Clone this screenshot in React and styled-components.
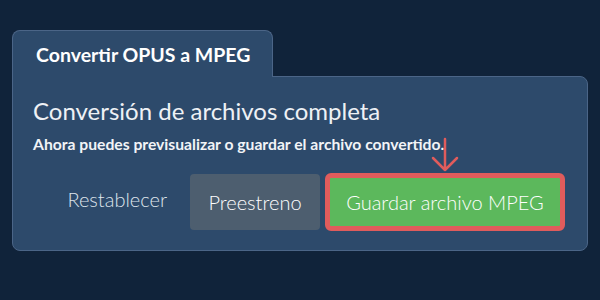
import styled, { createGlobalStyle } from 'styled-components';

const GlobalStyle = createGlobalStyle`
  html, body {
    margin: 0;
    padding: 0;
    background: #10233a;
    font-family: Lato, "Noto Sans", sans-serif;
  }
`;

const Page = styled.div`
  width: 600px;
  height: 300px;
  box-sizing: border-box;
  padding: 30px 12px 0 12px;
`;

const Tab = styled.div`
  display: inline-block;
  box-sizing: border-box;
  width: 261px;
  height: 47px;
  padding: 12px 0 0 23px;
  background: #2d4a6b;
  border: 1px solid #4b6587;
  border-bottom: none;
  border-radius: 8px 8px 0 0;
  color: #ffffff;
  font-weight: 700;
  font-size: 19.5px;
  position: relative;
  z-index: 1;
  margin-bottom: -1px;
`;

const Panel = styled.div`
  box-sizing: border-box;
  height: 175px;
  background: #2d4a6b;
  border: 1px solid #4b6587;
  border-radius: 0 8px 8px 8px;
  padding: 18px 22px 0 20px;
`;

const Heading = styled.h2`
  margin: 0;
  font-size: 24px;
  font-weight: 400;
  color: #eef1f5;
  line-height: 32px;
`;

const Sub = styled.p`
  margin: 7px 0 0 0;
  font-size: 15.7px;
  font-weight: 700;
  color: #f2f4f7;
  line-height: 20px;
`;

const Actions = styled.div`
  display: flex;
  justify-content: flex-end;
  align-items: center;
  gap: 5px;
  margin-top: 19px;
`;

const Button = styled.button`
  position: relative;
  box-sizing: border-box;
  height: ${p => (p.$kind === 'primary' ? 58 : 56)}px;
  font-family: inherit;
  font-size: 20px;
  font-weight: 300;
  white-space: nowrap;
  border-radius: ${p => (p.$kind === 'primary' ? 6 : 4)}px;
  cursor: pointer;
  color: ${p => (p.$kind === 'ghost' ? '#dfe5ec' : '#ffffff')};
  background: ${p =>
    p.$kind === 'primary' ? '#5cb85c' : p.$kind === 'muted' ? '#4d5e6f' : 'transparent'};
  border: ${p => (p.$kind === 'primary' ? '5px solid #e05c5c' : 'none')};
  padding: ${p => (p.$kind === 'ghost' ? '0 18px 6px 0' : '0')};
  width: ${p => (p.$w ? `${p.$w}px` : 'auto')};
`;

const Arrow = styled.svg`
  position: absolute;
  left: 50%;
  top: -40px;
  transform: translateX(-50%);
  overflow: visible;
`;

export default function App() {
  return (
    <>
      <GlobalStyle />
      <Page>
        <Tab>Convertir OPUS a MPEG</Tab>
        <Panel>
          <Heading>Conversión de archivos completa</Heading>
          <Sub>Ahora puedes previsualizar o guardar el archivo convertido.</Sub>
          <Actions>
            <Button $kind="ghost">Restablecer</Button>
            <Button $kind="muted" $w={130}>Preestreno</Button>
            <Button $kind="primary" $w={240}>
              Guardar archivo MPEG
              <Arrow width="28" height="34" viewBox="0 0 28 34">
                <path
                  d="M14 1 L14 32 M2 20 L14 32 L26 20"
                  fill="none"
                  stroke="#e05c5c"
                  strokeWidth="2.5"
                  strokeLinecap="round"
                  strokeLinejoin="round"
                />
              </Arrow>
            </Button>
          </Actions>
        </Panel>
      </Page>
    </>
  );
}
